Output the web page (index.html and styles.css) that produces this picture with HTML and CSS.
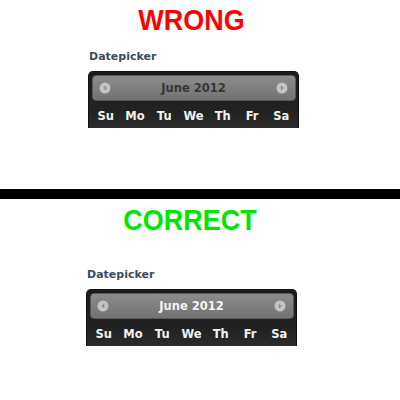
FILE: index.html
```html
<!DOCTYPE html>
<html>
<head>
<meta charset="utf-8">
<link rel="stylesheet" href="styles.css">
</head>
<body>
<section class="panel panel-wrong">
  <h1 class="title title-wrong">WRONG</h1>
  <div class="demo">
    <div class="label">Datepicker</div>
    <div class="calendar">
      <div class="cal-header">
        <svg class="nav" width="12" height="12" viewBox="0 0 12 12"><circle cx="6" cy="6" r="5.5" fill="#c3c3c3"/><path d="M7.2 3.4 L4.4 6 L7.2 8.6 Z" fill="#8a8a8a"/></svg>
        <span class="month month-dark">June 2012</span>
        <svg class="nav" width="12" height="12" viewBox="0 0 12 12"><circle cx="6" cy="6" r="5.5" fill="#c3c3c3"/><path d="M4.8 3.4 L7.6 6 L4.8 8.6 Z" fill="#8a8a8a"/></svg>
      </div>
      <div class="weekdays">
        <span>Su</span><span>Mo</span><span>Tu</span><span>We</span><span>Th</span><span>Fr</span><span>Sa</span>
      </div>
    </div>
  </div>
</section>
<div class="divider"></div>
<section class="panel panel-correct">
  <h1 class="title title-correct">CORRECT</h1>
  <div class="demo">
    <div class="label">Datepicker</div>
    <div class="calendar">
      <div class="cal-header">
        <svg class="nav" width="12" height="12" viewBox="0 0 12 12"><circle cx="6" cy="6" r="5.5" fill="#c3c3c3"/><path d="M7.2 3.4 L4.4 6 L7.2 8.6 Z" fill="#8a8a8a"/></svg>
        <span class="month month-light">June 2012</span>
        <svg class="nav" width="12" height="12" viewBox="0 0 12 12"><circle cx="6" cy="6" r="5.5" fill="#c3c3c3"/><path d="M4.8 3.4 L7.6 6 L4.8 8.6 Z" fill="#8a8a8a"/></svg>
      </div>
      <div class="weekdays">
        <span>Su</span><span>Mo</span><span>Tu</span><span>We</span><span>Th</span><span>Fr</span><span>Sa</span>
      </div>
    </div>
  </div>
</section>
</body>
</html>
```
FILE: styles.css
```css
html, body {
  margin: 0;
  padding: 0;
  background: #fff;
}
body {
  width: 400px;
  height: 400px;
  overflow: hidden;
}
.panel {
  box-sizing: border-box;
}
.panel-wrong {
  height: 189px;
  padding-top: 3px;
}
.panel-correct {
  height: 201px;
  padding-top: 4px;
}
.divider {
  height: 10px;
  background: #000;
}
.title {
  margin: 0;
  font-family: "Liberation Sans", Arial, sans-serif;
  font-weight: bold;
  font-size: 30px;
  line-height: 34px;
  text-align: center;
  transform: scaleX(0.9);
}
.title-wrong {
  width: 383px;
  color: #ff0000;
}
.title-correct {
  width: 380px;
  color: #00e600;
}
.panel-wrong .demo {
  margin-left: 88px;
  padding-top: 13px;
}
.panel-correct .demo {
  margin-left: 86px;
  padding-top: 31px;
}
.label {
  font-family: "DejaVu Sans", Verdana, sans-serif;
  font-weight: bold;
  font-size: 11px;
  line-height: 13px;
  color: #3b4b5c;
  padding-left: 1px;
  margin-bottom: 8px;
}
.calendar {
  box-sizing: border-box;
  width: 211px;
  height: 57px;
  padding: 3px 2px 0 3px;
  background: linear-gradient(#1c1c1c 0%, #222 70%, #2b2b2b 100%);
  border: 1px solid #111;
  border-bottom: none;
  border-radius: 5px 5px 0 0;
  font-family: "DejaVu Sans", Verdana, sans-serif;
  font-weight: bold;
}
.cal-header {
  box-sizing: border-box;
  height: 26px;
  display: flex;
  align-items: center;
  justify-content: space-between;
  padding: 0 7px 0 6px;
  background: linear-gradient(#8c8c8c, #727272);
  border: 1px solid #585858;
  border-radius: 4px;
}
.nav {
  display: block;
}
.month {
  font-size: 11.5px;
  line-height: 13px;
}
.month-dark {
  color: #363636;
}
.month-light {
  color: #f4f4f4;
}
.weekdays {
  display: grid;
  grid-template-columns: repeat(7, 1fr);
  margin-left: -1px;
  padding-top: 9px;
  color: #f2f2f2;
  font-size: 11.5px;
  line-height: 13px;
  text-align: center;
}
```
